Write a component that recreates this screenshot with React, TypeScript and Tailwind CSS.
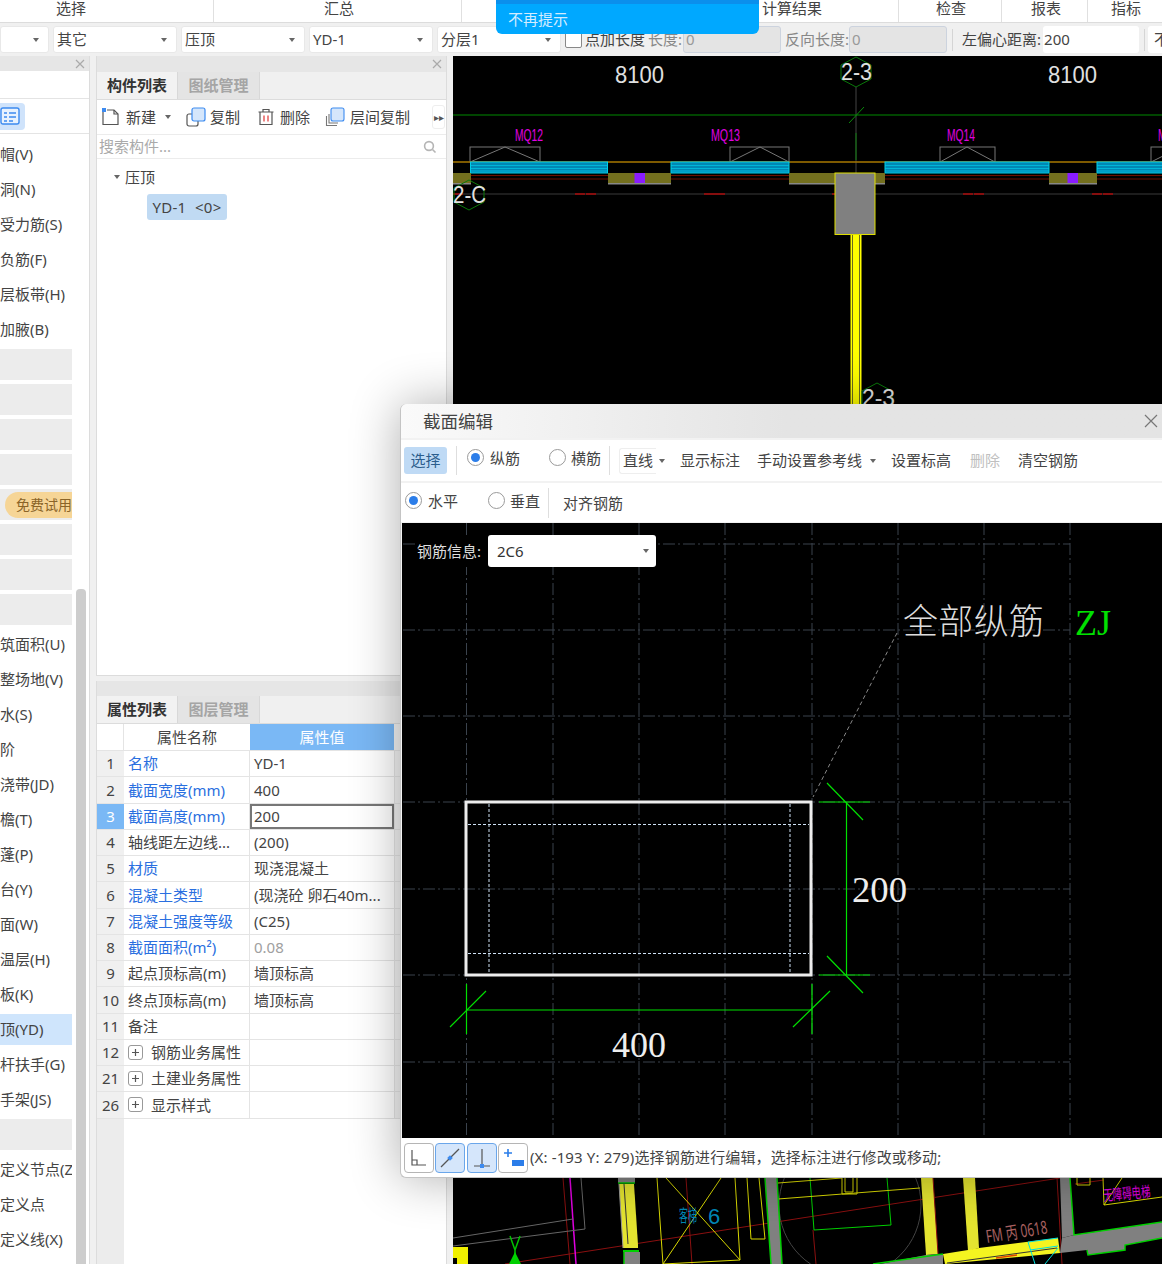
import type { ReactNode } from "react";

const leftItems = [
  "帽(V)", "洞(N)", "受力筋(S)", "负筋(F)", "层板带(H)", "加腋(B)", "", "", "", "", "trial", "", "", "",
  "筑面积(U)", "整场地(V)", "水(S)", "阶", "浇带(JD)", "檐(T)", "蓬(P)", "台(Y)", "面(W)", "温层(H)", "板(K)",
  "顶(YD)", "杆扶手(G)", "手架(JS)", "", "定义节点(Z", "定义点", "定义线(X)",
];

type Prop = { no: number; name: string; value?: string; link?: boolean; group?: boolean; muted?: boolean; active?: boolean };

const props: Prop[] = [
  { no: 1, name: "名称", value: "YD-1", link: true },
  { no: 2, name: "截面宽度(mm)", value: "400", link: true },
  { no: 3, name: "截面高度(mm)", value: "200", link: true, active: true },
  { no: 4, name: "轴线距左边线...", value: "(200)" },
  { no: 5, name: "材质", value: "现浇混凝土", link: true },
  { no: 6, name: "混凝土类型", value: "(现浇砼 卵石40m...", link: true },
  { no: 7, name: "混凝土强度等级", value: "(C25)", link: true },
  { no: 8, name: "截面面积(m²)", value: "0.08", link: true, muted: true },
  { no: 9, name: "起点顶标高(m)", value: "墙顶标高" },
  { no: 10, name: "终点顶标高(m)", value: "墙顶标高" },
  { no: 11, name: "备注" },
  { no: 12, name: "钢筋业务属性", group: true },
  { no: 21, name: "土建业务属性", group: true },
  { no: 26, name: "显示样式", group: true },
];

const Caret = () => <span className="inline-block w-0 h-0 border-x-[3px] border-x-transparent border-t-[4px] border-t-[#666]" />;

const Close = ({ size = 10 }: { size?: number }) => (
  <svg width={size} height={size} viewBox="0 0 10 10" stroke="#aaa" strokeWidth="1.2">
    <path d="M1 1l8 8M9 1l-8 8" />
  </svg>
);

const Select = ({ label, className }: { label: string; className: string }) => (
  <div className={`h-[27px] shrink-0 bg-white rounded-[3px] border border-[#e8e8e8] flex items-center justify-between pl-[3px] pr-[9px] overflow-hidden ${className}`}>
    <span>{label}</span>
    <Caret />
  </div>
);

const Radio = ({ on }: { on?: boolean }) => (
  <span className="w-[17px] h-[17px] shrink-0 rounded-full border border-[#9a9a9a] bg-white flex items-center justify-center">
    {on && <span className="w-[9px] h-[9px] rounded-full bg-[#2b7de9]" />}
  </span>
);

const Tabs = ({ first, second }: { first: string; second: string }) => (
  <div className="h-[28px] flex bg-[#f0f0f0] border-b border-[#dcdcdc] shrink-0">
    <div className="w-[81px] flex items-center justify-center font-bold text-[#333] bg-[#f2f2f2] border-r border-[#d8d8d8]">{first}</div>
    <div className="w-[82px] flex items-center justify-center font-bold text-[#a5a5a5] bg-[#e4e4e4] border-r border-[#d8d8d8]">{second}</div>
  </div>
);

const NewIcon = () => (
  <svg width="20" height="20" viewBox="0 0 20 20" fill="none" stroke="#555" strokeWidth="1.2">
    <path d="M2 5v12.5h15V7l-4-4H6" />
    <path d="M13 3v4h4" />
    <rect x="1" y="1" width="4" height="4" fill="#3d8bf0" stroke="none" />
  </svg>
);

const CopyIcon = () => (
  <svg width="20" height="20" viewBox="0 0 20 20" fill="none" stroke="#555" strokeWidth="1.2">
    <rect x="1" y="7" width="11" height="12" rx="2" />
    <rect x="6" y="1" width="13" height="13" rx="2" fill="#d5e6fb" stroke="#3d8bf0" />
  </svg>
);

const TrashIcon = () => (
  <svg width="18" height="20" viewBox="0 0 18 20" fill="none" stroke="#555" strokeWidth="1.2">
    <path d="M1.5 5h15M6 5V2.5h6V5M3 5v12.5h12V5" />
    <path d="M7 8.5v6M11 8.5v6" stroke="#e03535" />
  </svg>
);

const FloorCopyIcon = () => (
  <svg width="20" height="20" viewBox="0 0 20 20" fill="none" stroke="#777" strokeWidth="1.1">
    <path d="M1.5 9v9.5H12" />
    <path d="M4 7v9h9" />
    <rect x="6" y="1" width="13" height="13" rx="2" fill="#d5e6fb" stroke="#3d8bf0" />
  </svg>
);

const ListIcon = () => (
  <svg width="20" height="20" viewBox="0 0 20 20" fill="none" stroke="#3d8bf0" strokeWidth="1.4">
    <rect x="1" y="2" width="18" height="16" rx="2" fill="#e8f2fe" />
    <path d="M4 7h3M9 7h7M4 11h3M9 11h7M4 15h3M9 15h4" />
  </svg>
);

const SearchIcon = () => (
  <svg width="14" height="14" viewBox="0 0 14 14" fill="none" stroke="#b5b5b5" strokeWidth="1.6">
    <circle cx="6" cy="6" r="4.4" />
    <path d="M9.5 9.5l3 3" />
  </svg>
);

const LeftPanel = () => (
  <div className="w-[90px] shrink-0 bg-white border-r border-[#dcdcdc] flex flex-col overflow-hidden">
    <div className="h-[15px] shrink-0 bg-[#e6e6e6] flex items-center justify-end pr-[4px]"><Close /></div>
    <div className="h-[28px] shrink-0 border-b border-[#e4e4e4]" />
    <div className="h-[35px] shrink-0 border-b border-[#e4e4e4] flex items-center">
      <div className="w-[25px] h-[27px] rounded-r-[4px] bg-[#cfe3fb] flex items-center"><ListIcon /></div>
    </div>
    <div className="flex flex-1 min-h-0 pt-[3px]">
      <div className="w-[72px] shrink-0">
        {leftItems.map((item, i) => {
          if (item === "trial") {
            return (
              <div key={i} className="h-[35px] py-[2px]">
                <div className="h-[31px] bg-[#ececec] flex items-center pl-[5px]">
                  <span className="flex-1 h-[26px] rounded-l-[13px] bg-[#f6d596] text-[14px] text-[#8a6428] flex items-center justify-end whitespace-nowrap">免费试用</span>
                </div>
              </div>
            );
          }
          if (!item) return <div key={i} className="h-[35px] py-[2px]"><div className="h-[31px] bg-[#ececec]" /></div>;
          const selected = item === "顶(YD)";
          return (
            <div key={i} className="h-[35px] py-[2px]">
              <div className={`h-[31px] flex items-center whitespace-nowrap overflow-hidden ${selected ? "bg-[#cfe5fc]" : ""}`}>{item}</div>
            </div>
          );
        })}
      </div>
      <div className="flex-1 pl-[4px] pt-[452px]">
        <div className="w-[10px] h-full rounded-t-[4px] bg-[#cdcdcd]" />
      </div>
    </div>
  </div>
);

const ListPanel = () => (
  <div className="h-[620px] shrink-0 bg-white border-x border-b border-[#dcdcdc] flex flex-col">
    <div className="h-[16px] shrink-0 bg-[#e6e6e6] flex items-center justify-end pr-[4px]"><Close /></div>
    <Tabs first="构件列表" second="图纸管理" />
    <div className="h-[35px] shrink-0 flex items-center pl-[4px] border-b border-[#ececec]">
      <NewIcon />
      <span className="ml-[5px]">新建</span>
      <span className="ml-[9px] mr-[15px] flex"><Caret /></span>
      <CopyIcon />
      <span className="ml-[4px]">复制</span>
      <span className="w-[17px]" />
      <TrashIcon />
      <span className="ml-[5px]">删除</span>
      <span className="w-[15px]" />
      <FloorCopyIcon />
      <span className="ml-[5px]">层间复制</span>
      <div className="ml-[22px] w-[13px] h-[24px] rounded-[3px] border border-[#eee] text-[10px] flex items-center justify-center text-[#555]">▸▸</div>
    </div>
    <div className="h-[24px] shrink-0 flex items-center justify-between pl-[2px] pr-[9px] border-b border-[#ececec] text-[#aaa]">
      <span>搜索构件...</span>
      <SearchIcon />
    </div>
    <div className="pl-[17px] pt-[7px]">
      <div className="h-[22px] flex items-center">
        <Caret />
        <span className="ml-[5px]">压顶</span>
      </div>
      <div className="mt-[6px] ml-[33px] w-[80px] h-[26px] rounded-[3px] bg-[#c0daf3] flex items-center justify-center whitespace-pre tracking-[0.3px]">YD-1  {"<0>"}</div>
    </div>
  </div>
);

const PlusBox = () => (
  <span className="w-[15px] h-[15px] shrink-0 rounded-[3px] border border-[#999] flex items-center justify-center">
    <svg width="9" height="9" viewBox="0 0 9 9" stroke="#555" strokeWidth="1.2"><path d="M4.5 1v7M1 4.5h7" /></svg>
  </span>
);

const PropPanel = () => (
  <div className="mt-[5px] flex-1 min-h-0 bg-white border-x border-[#dcdcdc] flex flex-col">
    <div className="h-[15px] shrink-0 bg-[#e6e6e6]" />
    <Tabs first="属性列表" second="图层管理" />
    <div className="grid grid-cols-[27px_126px_144px_1fr] h-[27px] shrink-0 border-b border-[#e4e4e4] bg-white">
      <div className="border-r border-[#e4e4e4]" />
      <div className="flex items-center justify-center">属性名称</div>
      <div className="flex items-center justify-center bg-[#7ab8f5] text-white">属性值</div>
      <div className="bg-[#f4f4f4]" />
    </div>
    {props.map((p) => (
      <div key={p.no} className="grid grid-cols-[27px_126px_144px_1fr] h-[26.25px] shrink-0 border-b border-[#e4e4e4] bg-white">
        <div className={`flex items-center justify-center ${p.active ? "bg-[#7ab8f5] text-white" : "bg-[#f0f0f0]"}`}>{p.no}</div>
        <div className={`flex items-center pl-[4px] whitespace-nowrap overflow-hidden border-r border-[#e4e4e4] ${p.link ? "text-[#2a6fe0]" : ""}`}>
          {p.group && <span className="mr-[8px] flex"><PlusBox /></span>}
          {p.name}
        </div>
        <div className={`flex items-center whitespace-nowrap overflow-hidden ${p.active ? "border-2 border-[#777] pl-[2px]" : "pl-[4px]"} ${p.muted ? "text-[#a0a0a0]" : ""}`}>{p.value}</div>
        <div className="bg-[#f4f4f4] border-l border-[#e4e4e4]" />
      </div>
    ))}
    <div className="flex-1 flex">
      <div className="w-[27px] bg-[#ececec]" />
      <div className="flex-1 bg-white" />
    </div>
  </div>
);

const Hexagon = ({ cx, cy }: { cx: number; cy: number }) => (
  <polygon
    points={`${cx},${cy - 15} ${cx + 15},${cy - 7} ${cx + 15},${cy + 7} ${cx},${cy + 15} ${cx - 15},${cy + 7} ${cx - 15},${cy - 7}`}
    fill="none"
    stroke="#0a7a0a"
    strokeWidth="1"
  />
);

const CadLabel = ({ x, y, w, size = 24, fill = "#e0e0e0", children }: { x: number; y: number; w: number; size?: number; fill?: string; children: ReactNode }) => (
  <text x={x} y={y} fontFamily="Liberation Sans, sans-serif" fontSize={size} fill={fill} textLength={w} lengthAdjust="spacingAndGlyphs">{children}</text>
);

const WallStrip = ({ x, w }: { x: number; w: number }) => (
  <g>
    <rect x={x} y="162" width={w} height="11" fill="#0088b4" stroke="#00cfe8" strokeWidth="1" />
    <path d={`M${x} 165.5h${w}M${x} 168.5h${w}M${x} 171h${w}`} stroke="#00c8e8" strokeWidth="0.7" />
  </g>
);

const Block = ({ x, w, mark }: { x: number; w: number; mark?: number }) => (
  <g>
    <rect x={x} y="173" width={w} height="10" fill="#736f1e" />
    <rect x={x} y="183" width={w} height="1.5" fill="#888" />
    {mark !== undefined && <rect x={mark} y="173" width="10.5" height="10" fill="#8a1cff" />}
  </g>
);

const WindowMark = ({ x, w, apex }: { x: number; w: number; apex: number }) => (
  <g fill="none" stroke="#777" strokeWidth="1">
    <rect x={x} y="147" width={w} height="15" />
    <path d={`M${x} 162L${apex} 147L${x + w} 162`} />
  </g>
);

const MainCad = () => (
  <svg width="709" height="1208" viewBox="453 56 709 1208" className="block shrink-0 bg-black">
    <CadLabel x={615} y={83} w={49}>8100</CadLabel>
    <CadLabel x={1048} y={83} w={49}>8100</CadLabel>
    <Hexagon cx={856} cy={72} />
    <CadLabel x={841} y={80} w={31}>2-3</CadLabel>
    <path d="M856 87V173" stroke="#444" strokeWidth="1" />
    <path d="M856 133V160" stroke="#0a7a0a" strokeWidth="1" />
    <path d="M453 115H1162" stroke="#008a00" strokeWidth="1" />
    <path d="M849 123L864 107" stroke="#0a8a0a" strokeWidth="1" />
    <CadLabel x={515} y={141} w={28} size={16} fill="#e000e0">MQ12</CadLabel>
    <CadLabel x={711} y={141} w={29} size={16} fill="#e000e0">MQ13</CadLabel>
    <CadLabel x={947} y={141} w={28} size={16} fill="#e000e0">MQ14</CadLabel>
    <CadLabel x={1158} y={141} w={28} size={16} fill="#e000e0">MQ15</CadLabel>
    <WindowMark x={470} w={70} apex={505} />
    <WindowMark x={730} w={59} apex={760} />
    <WindowMark x={940} w={55} apex={967} />
    <WindowMark x={1151} w={60} apex={1181} />
    <path d="M453 162H1162" stroke="#a87800" strokeWidth="1.5" />
    <WallStrip x={470.5} w={137} />
    <WallStrip x={671} w={118} />
    <WallStrip x={885} w={164} />
    <WallStrip x={1097} w={70} />
    <path d="M453 175.5H1162M453 179H1162" stroke="#6b1000" strokeWidth="1" />
    <Block x={453} w={18} />
    <Block x={608} w={63} mark={634.5} />
    <Block x={789} w={96} />
    <Block x={1049} w={48} mark={1067.5} />
    <path d="M453 194H1162" stroke="#3a3a3a" strokeWidth="1" />
    <path d="M453 194h10M575 194h10M586 194h10M704 194h21M832 194h4M963 194h10M974 194h10M1092 194h10M1103 194h10" stroke="#f00000" strokeWidth="1" />
    <Hexagon cx={469} cy={195} />
    <CadLabel x={453} y={203} w={33}>2-C</CadLabel>
    <rect x="835" y="173" width="40" height="61.5" fill="#808080" stroke="#e0e000" strokeWidth="1" />
    <rect x="850.5" y="235" width="11" height="175" fill="#ffff00" />
    <path d="M852.5 235V410M859.5 235V410" stroke="#6a6a20" strokeWidth="1" />
    <Hexagon cx={877} cy={398} />
    <CadLabel x={862} y={406} w={33}>2-3</CadLabel>

    {/* lower part of the drawing, under the dialog */}
    <g fill="none" strokeWidth="1">
      <circle cx="850" cy="1205" r="71" stroke="#444" />
      <path d="M505 1264L1060 1178" stroke="#8a1010" />
      <path d="M1075 1184L1104 1180" stroke="#8a1010" />
      <path d="M563 1178L570 1264M686 1178L692 1264M813 1230L816 1264M1057 1178L1062 1264" stroke="#8a1010" />
      <path d="M570 1178L576 1264" stroke="#e000e0" strokeWidth="1.5" />
      <path d="M581 1178L585 1229L453 1246M573 1219L453 1238" stroke="#666" />
      <path d="M810 1178L814 1230L891 1225L887 1178" stroke="#00d000" />
      <path d="M666 1178L740 1260M721 1178L663 1264M657 1178L663 1264L740 1260L735 1178" stroke="#d8d800" />
      <path d="M747 1178L751 1239H765L759 1178" stroke="#d8d800" />
      <path d="M778 1183L842 1178M778 1199L920 1188M842 1178V1194H857V1178M845 1178V1192H853V1178" stroke="#d8d800" />
      <path d="M1103 1178L1104 1205L1162 1197M1104 1205L1122 1178M1077 1178V1185H1090V1178" stroke="#d8d800" />
    </g>
    <path d="M453 1247H468V1264H457V1258H453Z" fill="#f0f000" />
    <path d="M618 1178H635V1183H618Z" fill="#808080" />
    <path d="M618 1183H635" stroke="#00c000" strokeWidth="1.5" />
    <path d="M619 1184H634L638 1245V1248H623Z" fill="#e4e430" />
    <path d="M619 1184L623 1248" stroke="#999" strokeWidth="1" />
    <path d="M624 1184L628 1244" stroke="#333" strokeWidth="1" />
    <path d="M623 1251H639" stroke="#00d000" strokeWidth="2" />
    <path d="M624 1252H640V1264H624Z" fill="#808080" />
    <path d="M624 1252V1264" stroke="#00d000" strokeWidth="1.5" />
    <path d="M765 1178H777L782 1264H771Z" fill="#808080" />
    <path d="M765 1178L771 1264M777 1178L782 1264" stroke="#00d000" strokeWidth="1.5" />
    <path d="M921 1178H933L938 1254L926 1255Z" fill="#e4e430" />
    <path d="M933 1178L938 1254" stroke="#8a1010" strokeWidth="1" />
    <path d="M963 1178H975L979 1248L968 1251Z" fill="#e4e430" />
    <path d="M926 1255L943 1254V1264H880Z" fill="#808080" />
    <path d="M873 1264L943 1254" stroke="#00d000" strokeWidth="1.5" />
    <path d="M943 1254L968 1250L979 1248L1058 1238L1060 1253L945 1264Z" fill="#f4f420" />
    <path d="M947 1263L1057 1248" stroke="#333" strokeWidth="1" />
    <path d="M996 1258L1017 1255" stroke="#e04000" strokeWidth="1.5" />
    <path d="M1028 1242L1058 1238M1030 1250L1058 1246M1028 1242L1035 1264M1058 1248L1045 1264" fill="none" stroke="#00e0e0" strokeWidth="1" />
    <path d="M1060 1178H1070L1074 1235L1062 1238Z" fill="#808080" />
    <path d="M1062 1238L1074 1235L1162 1222V1238L1125 1245V1250L1088 1255L1087 1250L1060 1253Z" fill="#808080" />
    <path d="M1070 1178L1074 1235L1162 1222M1162 1238L1125 1245V1250L1088 1255L1087 1250" fill="none" stroke="#00d000" strokeWidth="1.5" />
    <path d="M510 1236L515 1250L520 1236M515 1250V1255" fill="none" stroke="#00c000" strokeWidth="1.5" />
    <path d="M515 1252L509 1264H521Z" fill="#00d000" />
    <text x="679" y="1222" fontSize="17" fill="#0088b8" textLength="18" lengthAdjust="spacingAndGlyphs">客梯</text>
    <text x="708" y="1224" fontFamily="Liberation Sans, sans-serif" fontSize="22" fill="#0088b8">6</text>
    <text x="987" y="1243" fontSize="18" fill="#a86060" textLength="62" lengthAdjust="spacingAndGlyphs" transform="rotate(-9 987 1243)">FM 丙 0618</text>
    <text x="1104" y="1201" fontSize="15" fill="#e000e0" textLength="47" lengthAdjust="spacingAndGlyphs" transform="rotate(-5 1104 1201)">无障碍电梯</text>
  </svg>
);

const SectionCad = () => {
  const gridX = [465.5, 552, 638, 724, 811, 897, 983, 1069];
  const gridY = [544, 630, 716, 802, 889, 975, 1062];
  return (
    <svg width="761" height="615" viewBox="401 523 761 615" className="block bg-black">
      <g stroke="#3b434d" strokeWidth="1" strokeDasharray="12 3 2 3" fill="none">
        {gridX.map((x) => <path key={x} d={`M${x} 523V1138`} />)}
        {gridY.map((y) => <path key={y} d={`M402 ${y}H1069`} />)}
      </g>
      <path d="M896 633L812 797" stroke="#888" strokeWidth="1" strokeDasharray="4 3" fill="none" />
      <rect x="465" y="802" width="345" height="173" fill="none" stroke="#ededed" strokeWidth="3" />
      <g stroke="#cfe2f5" strokeWidth="1" strokeDasharray="3 2" fill="none">
        <path d="M488 804V973M789 804V973M467 824.5H808M467 953.5H808" />
      </g>
      <g stroke="#00e000" strokeWidth="1.2" fill="none">
        <path d="M818 802H869M818 975H869M845.5 802V975" />
        <path d="M826 783L862 820M826 956L862 993" />
        <path d="M465.5 984V1034M811 984V1034M465.5 1010H811" />
        <path d="M449 1027L485 991M792 1027L829 991" />
      </g>
      <text x="851" y="902" fontFamily="Liberation Serif, serif" fontSize="36" fill="#eee" textLength="55" lengthAdjust="spacingAndGlyphs">200</text>
      <text x="611" y="1057" fontFamily="Liberation Serif, serif" fontSize="36" fill="#eee" textLength="54" lengthAdjust="spacingAndGlyphs">400</text>
      <text x="902" y="634" fontSize="35" fontWeight="300" fill="#ddd" textLength="141">全部纵筋</text>
      <text x="1074" y="635" fontFamily="Liberation Serif, serif" fontSize="36" fill="#00e000" textLength="36" lengthAdjust="spacingAndGlyphs">ZJ</text>
    </svg>
  );
};

const SnapBtn = ({ active, children }: { active?: boolean; children: ReactNode }) => (
  <div className={`w-[30px] h-[30px] rounded-[4px] border flex items-center justify-center ${active ? "bg-[#d5e6fb] border-[#6aa6ea]" : "bg-white border-[#b5b5b5]"}`}>
    <svg width="24" height="24" viewBox="0 0 24 24" fill="none" stroke="#555" strokeWidth="1.2">{children}</svg>
  </div>
);

const Dialog = () => (
  <div className="absolute left-[400px] top-[404px] w-[770px] h-[774px] bg-[#f2f2f2] rounded-tl-[6px] rounded-bl-[6px] border-l border-b border-[#c4c4c4] shadow-[0_0_50px_rgba(0,0,0,0.32)] flex flex-col">
    <div className="h-[34px] shrink-0 bg-gradient-to-r from-[#fafafa] via-[#e4e4e4] to-[#e4e4e4] rounded-tl-[6px] flex items-center justify-between pl-[22px] pr-[10px] text-[17.5px]">
      <span>截面编辑</span>
      <span className="mr-[2px] flex"><svg width="14" height="14" viewBox="0 0 14 14" stroke="#777" strokeWidth="1.2"><path d="M1 1l12 12M13 1L1 13" /></svg></span>
    </div>
    <div className="h-[41px] mt-[2px] shrink-0 bg-white flex items-center">
      <div className="ml-[3px] w-[43px] h-[27px] rounded-[3px] bg-[#bfdaf5] text-[#2c5d8c] flex items-center justify-center">选择</div>
      <div className="ml-[9px] w-px h-[29px] bg-[#dedede]" />
      <span className="ml-[10px] flex -mt-[6px]"><Radio on /></span>
      <span className="ml-[6px] -mt-[5px]">纵筋</span>
      <span className="ml-[29px] flex -mt-[6px]"><Radio /></span>
      <span className="ml-[5px] -mt-[5px]">横筋</span>
      <div className="ml-[8px] w-px h-[29px] bg-[#dedede]" />
      <div className="ml-[9px] w-[37px] h-[26px] rounded-l-[3px] border-y border-l border-[#eee] pl-[3px] flex items-center">直线</div>
      <span className="ml-[3px] flex"><Caret /></span>
      <span className="ml-[15px]">显示标注</span>
      <span className="ml-[17px]">手动设置参考线</span>
      <span className="ml-[8px] flex"><Caret /></span>
      <span className="ml-[15px]">设置标高</span>
      <span className="ml-[19px] text-[#c0c0c0]">删除</span>
      <span className="ml-[18px]">清空钢筋</span>
    </div>
    <div className="h-[39px] mt-[2px] shrink-0 bg-white flex items-center">
      <span className="ml-[4px] flex -mt-[4px]"><Radio on /></span>
      <span className="ml-[6px] -mt-[3px]">水平</span>
      <span className="ml-[30px] flex -mt-[4px]"><Radio /></span>
      <span className="ml-[5px] -mt-[3px]">垂直</span>
      <div className="ml-[8px] w-px h-[30px] bg-[#dedede]" />
      <span className="ml-[14px] mt-[1px]">对齐钢筋</span>
    </div>
    <div className="mt-[1px] relative shrink-0 w-[761px] h-[615px] ml-px">
      <SectionCad />
      <div className="absolute left-[15px] top-[12px] h-[32px] flex items-center text-[#ddd] bg-black">
        <span>钢筋信息:</span>
        <div className="ml-[7px] w-[168px] h-[32px] rounded-[3px] bg-white text-[#333] flex items-center justify-between pl-[9px] pr-[7px]">
          <span>2C6</span>
          <Caret />
        </div>
      </div>
    </div>
    <div className="flex-1 bg-white rounded-bl-[6px] flex items-center pl-[3px] whitespace-nowrap">
      <div className="flex gap-[1.3px]">
        <SnapBtn><path d="M5 4v15h14M5 14h5v5" /></SnapBtn>
        <SnapBtn active><path d="M3 21L21 3" /><rect x="10" y="10" width="4" height="4" fill="#3d8bf0" stroke="none" transform="rotate(45 12 12)" /></SnapBtn>
        <SnapBtn active><path d="M12 3v17M4 20h16" /><rect x="10" y="18" width="4" height="4" fill="#3d8bf0" stroke="none" /></SnapBtn>
        <SnapBtn><path d="M7 3v8M3 7h8" stroke="#2b7de9" strokeWidth="1.6" /><rect x="11" y="14" width="12" height="6" fill="#2b7de9" stroke="none" /></SnapBtn>
      </div>
      <span className="ml-[2px] tracking-[0.14px]">(X: -193 Y: 279)选择钢筋进行编辑，选择标注进行修改或移动;</span>
    </div>
  </div>
);

const App = () => {
  return (
    <div className="relative w-[1162px] h-[1264px] overflow-hidden bg-[#f0f0f0] text-[15px] text-[#444] flex flex-col font-['Noto_Sans','Noto_Sans_CJK_SC',sans-serif]">
      <div className="h-[23px] shrink-0 flex bg-white border-b border-[#dcdcdc] leading-[16px]">
        <div className="w-[214px] pl-[56px] border-r border-[#e0e0e0]">选择</div>
        <div className="w-[248px] flex justify-center pl-[3px] border-r border-[#e0e0e0]">汇总</div>
        <div className="w-[437px] flex justify-end pr-[76px] border-r border-[#e0e0e0]">计算结果</div>
        <div className="w-[103px] flex justify-center pl-[2px] border-r border-[#e0e0e0]">检查</div>
        <div className="w-[86px] flex justify-center pl-[3px] border-r border-[#e0e0e0]">报表</div>
        <div className="w-[74px] flex justify-center pl-[2px]">指标</div>
      </div>

      <div className="h-[33px] shrink-0 flex items-center whitespace-nowrap">
        <Select label="" className="w-[49px]" />
        <Select label="其它" className="w-[124px] ml-[4px]" />
        <Select label="压顶" className="w-[124px] ml-[4px]" />
        <Select label="YD-1" className="w-[124px] ml-[4px]" />
        <Select label="分层1" className="w-[124px] ml-[4px]" />
        <span className="ml-[4px] w-[17px] h-[17px] shrink-0 rounded-[2px] border border-[#888] bg-white" />
        <span className="ml-[3px]">点加长度</span>
        <span className="ml-[3px] text-[#888]">长度:</span>
        <div className="ml-[1px] w-[98px] h-[27px] shrink-0 rounded-[3px] bg-[#e4e4e4] border border-[#ccd3de] text-[#999] pl-[2px] flex items-center">0</div>
        <span className="ml-[4px] text-[#888]">反向长度:</span>
        <div className="w-[98px] h-[27px] shrink-0 rounded-[3px] bg-[#e4e4e4] border border-[#ccd3de] text-[#999] pl-[2px] flex items-center">0</div>
        <span className="ml-[5px] w-px h-[22px] bg-[#d5d5d5]" />
        <span className="ml-[9px]">左偏心距离:</span>
        <div className="ml-[2px] w-[96px] h-[27px] shrink-0 rounded-[3px] bg-white pl-[1px] flex items-center">200</div>
        <span className="ml-[5px] w-px h-[22px] bg-[#d5d5d5]" />
        <div className="ml-[3px] h-[27px] flex-1 bg-white rounded-l-[3px] pl-[6px] flex items-center overflow-hidden">不</div>
      </div>

      <div className="flex flex-1 min-h-0">
        <LeftPanel />
        <div className="w-[6px] shrink-0" />
        <div className="w-[351px] shrink-0 flex flex-col">
          <ListPanel />
          <PropPanel />
        </div>
        <div className="w-[6px] shrink-0" />
        <MainCad />
      </div>

      <div className="absolute left-[496px] top-0 w-[263px] h-[34px] rounded-b-[6px] bg-[#00a8ff] border-t-[4px] border-t-[#0b8fec] text-[#d4ecff] pl-[12px] flex items-center pt-[1px]">不再提示</div>
      <Dialog />
    </div>
  );
};

export default App;
